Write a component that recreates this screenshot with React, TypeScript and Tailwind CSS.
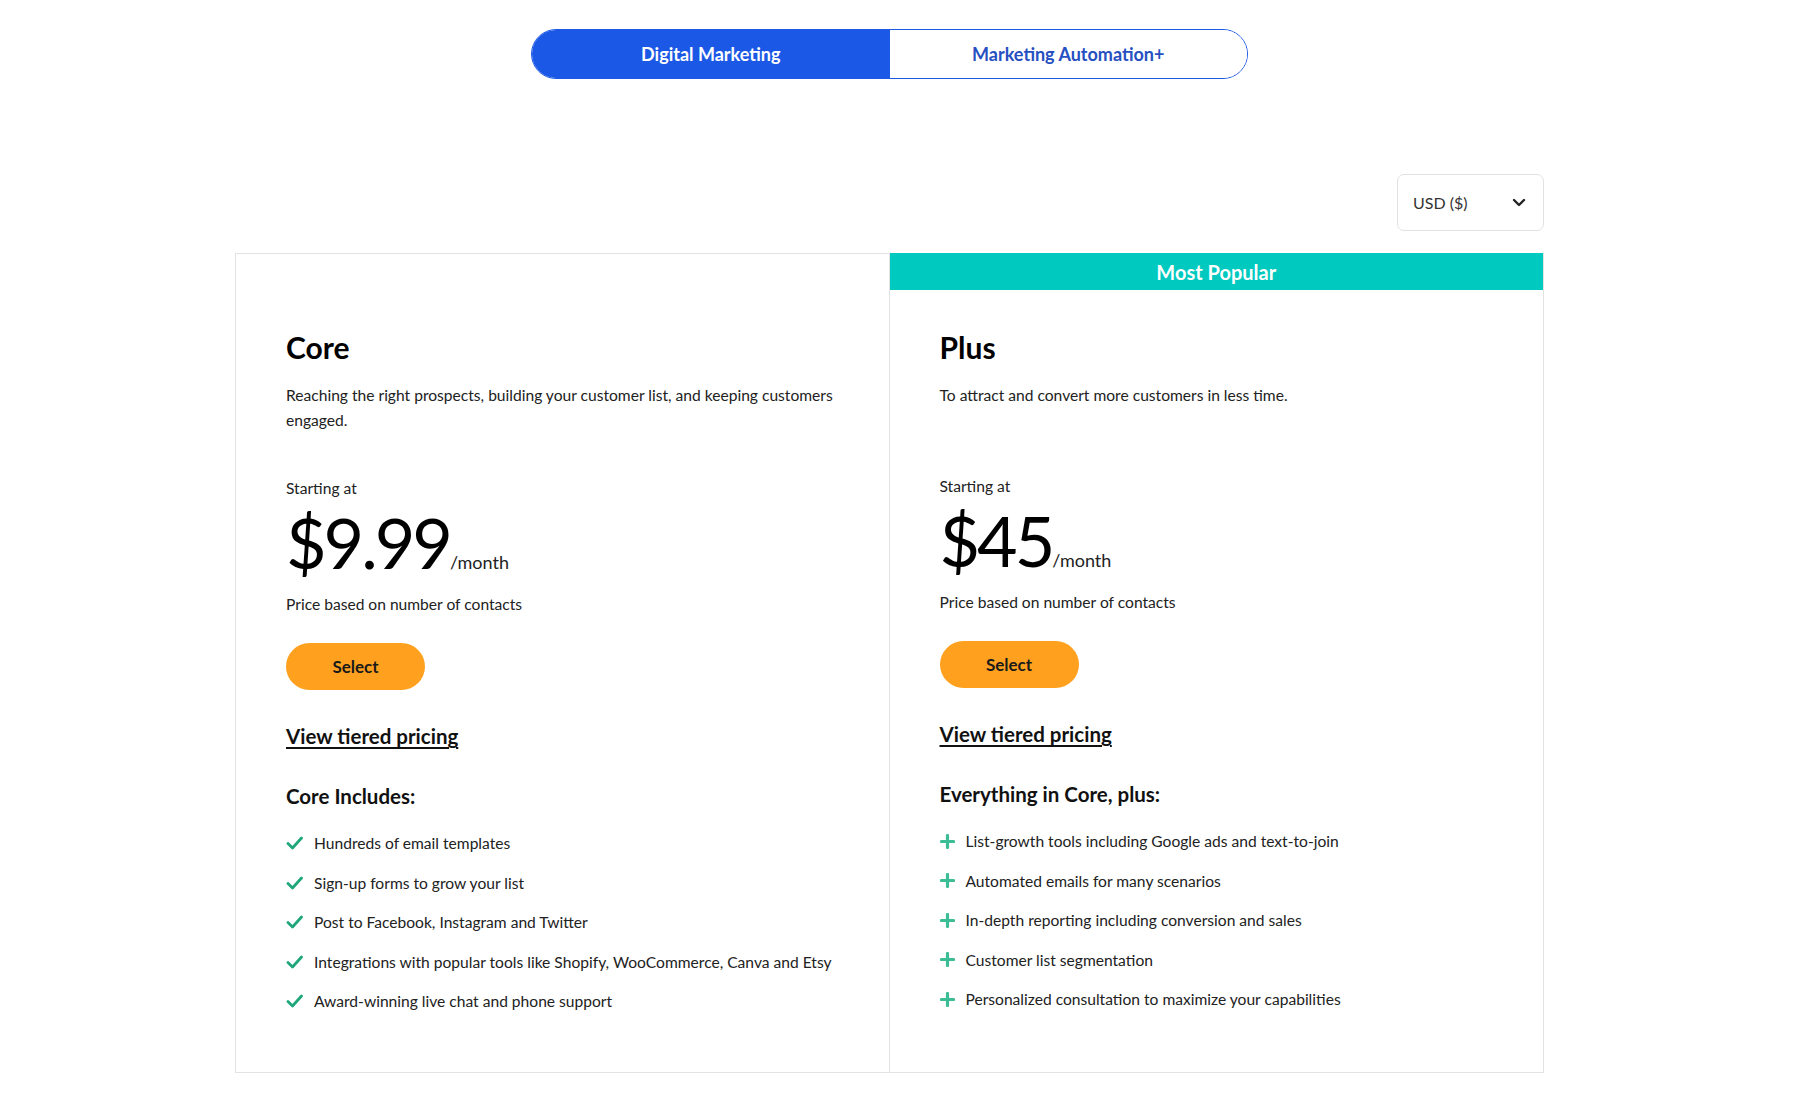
import React from "react";

const font = { fontFamily: "Lato, 'Noto Sans', sans-serif" };

function Check() {
  return (
    <svg width="17" height="14" viewBox="0 0 17 14" className="shrink-0">
      <path d="M2 7.5 L6.5 12 L15.5 2" fill="none" stroke="#1fa67a" strokeWidth="2.8" strokeLinecap="round" strokeLinejoin="round" />
    </svg>
  );
}

function Plus() {
  return (
    <svg width="15" height="15" viewBox="0 0 15 15" className="shrink-0">
      <path d="M7.5 1.5 V13.5 M1.5 7.5 H13.5" fill="none" stroke="#3cbd95" strokeWidth="3.2" strokeLinecap="round" />
    </svg>
  );
}

type Plan = {
  name: string;
  desc: string;
  price: string;
  includesTitle: string;
  items: string[];
  icon: "check" | "plus";
  popular?: boolean;
};

function Card({ plan }: { plan: Plan }) {
  return (
    <div className="flex flex-col">
      {plan.popular ? (
        <div className="h-[37px] bg-[#00c9bf] flex items-center justify-center text-white font-bold text-[20px]">
          Most Popular
        </div>
      ) : null}
      <div className={"px-[50px] pb-[59px] " + (plan.popular ? "pt-[39px]" : "pt-[75px]")}>
        <h2 className="text-[30px] leading-[36px] font-bold text-black">{plan.name}</h2>
        <p className="mt-[18px] min-h-[50px] text-[15.6px] leading-[25px] text-[#222] w-[570px]">{plan.desc}</p>
        <div className={"text-[15.6px] leading-[22px] text-[#222] " + (plan.popular ? "mt-[42px]" : "mt-[44px]")}>Starting at</div>
        <div className="mt-[8px] flex items-baseline">
          <span className="text-[70px] leading-[70px] tracking-[-3px] text-black font-normal">{plan.price}</span>
          <span className="text-[18px] text-[#222]">/month</span>
        </div>
        <div className="mt-[16px] text-[15.6px] leading-[22px] text-[#222]">Price based on number of contacts</div>
        <button className="mt-[28px] w-[139px] h-[47px] rounded-full bg-[#ffa11f] text-[#1a1a1a] font-bold text-[17px]">
          Select
        </button>
        <div className="mt-[33px]">
          <a className="text-[20.5px] leading-[26px] font-bold text-[#111] underline underline-offset-[3px]" href="#">
            View tiered pricing
          </a>
        </div>
        <h3 className="mt-[33px] text-[20.5px] leading-[26px] font-bold text-[#111]">{plan.includesTitle}</h3>
        <ul className="mt-[22px] flex flex-col gap-[15.5px]">
          {plan.items.map((it) => (
            <li key={it} className="flex items-center gap-[11px] text-[15.6px] leading-[24px] text-[#222]">
              {plan.icon === "check" ? <Check /> : <Plus />}
              <span>{it}</span>
            </li>
          ))}
        </ul>
      </div>
    </div>
  );
}

export default function App() {
  const core: Plan = {
    name: "Core",
    desc: "Reaching the right prospects, building your customer list, and keeping customers engaged.",
    price: "$9.99",
    includesTitle: "Core Includes:",
    icon: "check",
    items: [
      "Hundreds of email templates",
      "Sign-up forms to grow your list",
      "Post to Facebook, Instagram and Twitter",
      "Integrations with popular tools like Shopify, WooCommerce, Canva and Etsy",
      "Award-winning live chat and phone support",
    ],
  };
  const plus: Plan = {
    name: "Plus",
    desc: "To attract and convert more customers in less time.",
    price: "$45",
    includesTitle: "Everything in Core, plus:",
    icon: "plus",
    popular: true,
    items: [
      "List-growth tools including Google ads and text-to-join",
      "Automated emails for many scenarios",
      "In-depth reporting including conversion and sales",
      "Customer list segmentation",
      "Personalized consultation to maximize your capabilities",
    ],
  };
  return (
    <div className="min-h-[1119px] bg-white" style={font}>
      <div className="w-[1779px]">
        <div className="flex justify-center pt-[29px]">
          <div className="flex w-[717px] h-[50px] rounded-full border border-[#1b58e6] overflow-hidden">
            <button className="flex-1 bg-[#1b58e6] text-white font-bold text-[18px]">Digital Marketing</button>
            <button className="flex-1 bg-white text-[#2650c2] font-bold text-[18px]">Marketing Automation+</button>
          </div>
        </div>
        <div className="mx-auto w-[1309px]">
          <div className="flex justify-end mt-[95px]">
            <div className="w-[147px] h-[57px] rounded-[7px] border border-[#e2e2e2] flex items-center justify-between pl-[15px] pr-[17px]">
              <span className="text-[16px] text-[#333]">USD ($)</span>
              <svg width="14" height="9" viewBox="0 0 14 9">
                <path d="M2 2 L7 7 L12 2" fill="none" stroke="#222" strokeWidth="2.4" strokeLinecap="round" strokeLinejoin="round" />
              </svg>
            </div>
          </div>
          <div className="mt-[22px] grid grid-cols-2 border border-[#e3e3e3] border-t-0">
            <div className="border-t border-[#e3e3e3] border-r">
              <Card plan={core} />
            </div>
            <div>
              <Card plan={plus} />
            </div>
          </div>
        </div>
      </div>
    </div>
  );
}
